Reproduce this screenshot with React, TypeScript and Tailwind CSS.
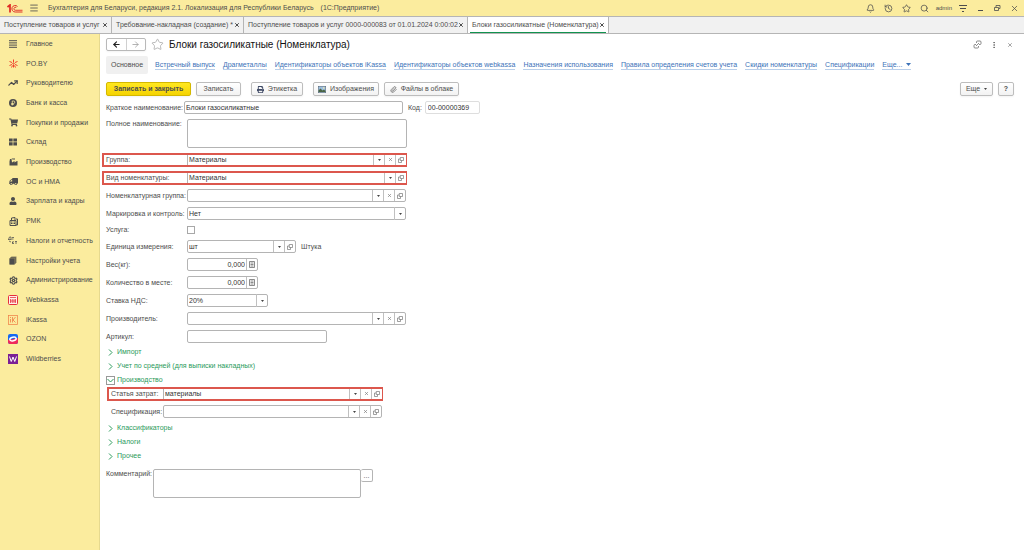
import React from "react";
import {
  ArrowLeft,
  ArrowRight,
  Bell,
  History,
  Star,
  Search,
  X,
  Menu,
  Paperclip,
  TrendingUp,
  Settings,
  EllipsisVertical,
} from "lucide-react";
import { FaShoppingCart, FaTruck, FaUser, FaPrint } from "react-icons/fa";

const tabs = [
  { title: "Поступление товаров и услуг", width: "w-[112px]" },
  { title: "Требование-накладная (создание) *", width: "w-[132px]" },
  { title: "Поступление товаров и услуг 0000-000083 от 01.01.2024 0:00:02", width: "w-[224px]" },
  { title: "Блоки газосиликатные (Номенклатура)", width: "w-[141px]", active: true },
];

const links = [
  "Встречный выпуск",
  "Драгметаллы",
  "Идентификаторы объектов iKassa",
  "Идентификаторы объектов webkassa",
  "Назначения использования",
  "Правила определения счетов учета",
  "Скидки номенклатуры",
  "Спецификации",
];

const sections = [
  { title: "Главное", icon: <ListIcon /> },
  { title: "PO.BY", icon: <SparkIcon /> },
  { title: "Руководителю", icon: <TrendingUp size={10} strokeWidth={3} /> },
  { title: "Банк и касса", icon: <RubleIcon /> },
  { title: "Покупки и продажи", icon: <FaShoppingCart size={9} /> },
  { title: "Склад", icon: <StockIcon /> },
  { title: "Производство", icon: <FactoryIcon /> },
  { title: "ОС и НМА", icon: <FaTruck size={9} className="-scale-x-100" /> },
  { title: "Зарплата и кадры", icon: <FaUser size={8} /> },
  { title: "РМК", icon: <RegisterIcon /> },
  { title: "Налоги и отчетность", icon: <DebitIcon /> },
  { title: "Настройки учета", icon: <BooksIcon /> },
  { title: "Администрирование", icon: <Settings size={9} strokeWidth={3} /> },
  { title: "Webkassa", icon: <WebkassaIcon /> },
  { title: "iKassa", icon: <IkassaIcon /> },
  { title: "OZON", icon: <OzonIcon /> },
  { title: "Wildberries", icon: <WildberriesIcon /> },
];

function ListIcon() {
  return (
    <svg width="8" height="8" viewBox="0 0 8 8" stroke="currentColor">
      <path d="M0 .7h8M0 2.9h8M0 5.1h8M0 7.3h8" />
    </svg>
  );
}

function SparkIcon() {
  return (
    <svg width="9" height="9" viewBox="0 0 18 18" stroke="#f0402c" strokeWidth="2" fill="none">
      <path d="M9 1v5M9 12v5M1 5l5 2M17 5l-5 2M1 13l5-2M17 13l-5-2M5 17l2-4M13 17l-2-4" />
      <circle cx="9" cy="9" r="1.5" />
    </svg>
  );
}

function RubleIcon() {
  return (
    <svg width="8" height="8" viewBox="0 0 16 16">
      <circle cx="8" cy="8" r="8" fill="currentColor" />
      <path d="M6.5 13V4H9a2.3 2.3 0 010 5H4.5M4.5 11h5" fill="none" stroke="#fbec9e" strokeWidth="1.6" />
    </svg>
  );
}

function StockIcon() {
  return (
    <svg width="8" height="8" viewBox="0 0 16 16" fill="currentColor">
      <path d="M0 1h7.3v6H0zM8.7 1H16v6H8.7zM0 8.5h7.3V15H0zM8.7 8.5H16V15H8.7z" />
    </svg>
  );
}

function FactoryIcon() {
  return (
    <svg width="9" height="8" viewBox="0 0 18 16" fill="currentColor">
      <path d="M1 15V7l1-5h3l1 7 5-3v3l5-3h1v9z" />
      <path d="M5 1h7v2H7z" />
    </svg>
  );
}

function RegisterIcon() {
  return (
    <svg width="9" height="9" viewBox="0 0 18 18" fill="none" stroke="currentColor" strokeWidth="2">
      <path d="M2 7h12v10H2zM5 7V2l7-1v6M14 4h3v12h-3" />
      <path d="M4 10h8M4 13h8" strokeDasharray="2 1" />
    </svg>
  );
}

function DebitIcon() {
  return (
    <svg width="10" height="9" viewBox="0 0 20 18" fill="none" stroke="currentColor" strokeWidth="1.5">
      <path d="M1 7l2-5h3v5M0 7h7M8 3h4M8 6h3M9 11v5M9 13l3-2M9 13l3 3M14 11h4M16 11v5M2 10l4 2" />
    </svg>
  );
}

function BooksIcon() {
  return (
    <svg width="8" height="9" viewBox="0 0 16 18">
      <path d="M1 5l4-4h10v12l-4 4H1z" fill="#8d8560" />
      <path d="M1 5h10v12H1z" fill="currentColor" />
      <path d="M3 3h10v12" fill="none" stroke="currentColor" />
    </svg>
  );
}

function WebkassaIcon() {
  return (
    <svg width="10" height="10" viewBox="0 0 20 20">
      <rect x="1" y="1" width="18" height="18" rx="2" fill="#fff0e8" stroke="#e52d3c" strokeWidth="2" />
      <path d="M4 5h12M5 8v8M8.5 8v8M12 8v8M15 8v8M4 12h12" stroke="#e52d3c" strokeWidth="1.5" />
    </svg>
  );
}

function IkassaIcon() {
  return (
    <svg width="10" height="10" viewBox="0 0 20 20" fill="none" stroke="#f0824a">
      <rect x="1" y="1" width="18" height="18" strokeWidth="1.5" />
      <path d="M5 8v7M5 4v2M9 4v11M15 4l-5 6 5 5" strokeWidth="1.7" />
    </svg>
  );
}

function OzonIcon() {
  return (
    <svg width="10" height="10" viewBox="0 0 20 20">
      <rect width="20" height="20" rx="4" fill="#1769f0" />
      <path d="M0 12v4a4 4 0 004 4h12a4 4 0 004-4V8z" fill="#f0285a" />
      <ellipse cx="10" cy="10" rx="6.5" ry="3.5" fill="none" stroke="#fff" strokeWidth="3" transform="rotate(-12 10 10)" />
    </svg>
  );
}

function WildberriesIcon() {
  return (
    <svg width="10" height="10" viewBox="0 0 20 20">
      <rect width="20" height="20" fill="#7b1f96" />
      <path d="M3 5l3.5 10L10 6l3.5 9L17 5" fill="none" stroke="#fff" strokeWidth="2" />
    </svg>
  );
}

function LogoIcon() {
  return (
    <svg width="16" height="9" viewBox="0 0 32 18" fill="none" stroke="#e02d26">
      <path d="M1 6l5-4v15" strokeWidth="3.5" />
      <path d="M21 5a6.5 6.500 0 10-4.500 11H31" strokeWidth="2" />
      <path d="M18.500 7a3 3 0 10-2 5.500H31" strokeWidth="1.800" />
    </svg>
  );
}

function OpenIcon() {
  return (
    <svg width="6" height="6" viewBox="0 0 12 12" fill="none" stroke="#777" strokeWidth="1.4">
      <path d="M4.500 1h6.500v6H4.500zM4.500 4H1v7h6V7" />
    </svg>
  );
}

function Arrow() {
  return (
    <svg width="3" height="2" viewBox="0 0 3 2" fill="#444">
      <path d="M0 0h3L1.500 2z" />
    </svg>
  );
}

function CalcIcon() {
  return (
    <svg width="6" height="7" viewBox="0 0 12 14" fill="none" stroke="#666" strokeWidth="1.5">
      <path d="M1 1h10v12H1zM3 4h6M3 7h6M3 10h6" />
    </svg>
  );
}

function LinkIcon() {
  return (
    <svg width="9" height="9" viewBox="0 0 18 18" fill="none" stroke="#666" strokeWidth="1.5">
      <path d="M7 6V4a2 2 0 012-2h5a2 2 0 012 2v3a2 2 0 01-2 2h-2M11 12v2a2 2 0 01-2 2H4a2 2 0 01-2-2v-3a2 2 0 012-2h2M6 12l6-6" />
    </svg>
  );
}

function PictureIcon() {
  return (
    <svg width="8" height="7" viewBox="0 0 16 14">
      <rect x=".5" y=".5" width="15" height="13" fill="#9dbfe0" stroke="#4d5c6b" />
      <path d="M1 12V9l4-4 4 4 3-2 3 3v2z" fill="#4a6544" />
      <circle cx="11.5" cy="4" r="1.5" fill="#fff2a0" />
    </svg>
  );
}

type Cell = "list" | "clear" | "open" | "calc";

const cells = {
  list: { label: "Выбрать из списка", icon: <Arrow /> },
  clear: { label: "Очистить", icon: <X size={5} strokeWidth={3} /> },
  open: { label: "Открыть", icon: <OpenIcon /> },
  calc: { label: "Калькулятор", icon: <CalcIcon /> },
};

type FieldProps = {
  id: string;
  label: string;
  value?: string;
  buttons?: Cell[];
  width?: string;
  labelWidth?: string;
  right?: boolean;
  marked?: boolean;
  note?: string;
};

function Field({ id, label, value = "", buttons = [], width = "w-[219px]", labelWidth = "w-[81px]", right, marked, note }: FieldProps) {
  return (
    <div className="flex h-[13px] items-center">
      <div className={marked ? "-ml-1 flex h-[14px] items-center border-2 border-[#dc574d] pl-0.5" : "flex h-full items-center"}>
        <label htmlFor={id} className={`shrink-0 whitespace-nowrap ${labelWidth}`}>{label}</label>
        <div className={`flex h-full border-[#b4b4b4] bg-white ${width} ${marked ? "-mr-px border-l" : "rounded-xs border"}`}>
          <input
            id={id}
            defaultValue={value}
            className={`min-w-0 flex-1 px-px text-[#333] outline-none ${right ? "text-right" : ""}`}
          />
          {buttons.map((name) => (
            <button
              key={name}
              type="button"
              aria-label={cells[name].label}
              className="flex w-[11px] shrink-0 items-center justify-center border-l border-[#c0c0c0] text-[#777]"
            >
              {cells[name].icon}
            </button>
          ))}
        </div>
      </div>
      {note && <span className="ml-[5px]">{note}</span>}
    </div>
  );
}

function SelectField({ id, label, value, width }: { id: string; label: string; value: string; width: string }) {
  return (
    <div className="flex h-[13px] items-center">
      <label htmlFor={id} className="w-[81px] shrink-0 whitespace-nowrap">{label}</label>
      <div className={`relative h-full ${width}`}>
        <select
          id={id}
          defaultValue={value}
          className="block h-full w-full appearance-none rounded-xs border border-[#b4b4b4] bg-white px-px text-[#333] outline-none"
        >
          <option>{value}</option>
        </select>
        <span className="pointer-events-none absolute inset-y-0 right-0 flex w-3 items-center justify-center border-l border-[#c0c0c0]">
          <Arrow />
        </span>
      </div>
    </div>
  );
}

function Group({ title, open }: { title: string; open?: boolean }) {
  return (
    <button type="button" aria-expanded={!!open} className="flex h-[14px] items-center gap-0.5 text-[#2b9a5b]">
      <span className={`flex size-[9px] items-center justify-center ${open ? "border border-[#999]" : ""}`}>
        {open ? (
          <svg width="7" height="5" viewBox="0 0 7 5" fill="none" stroke="currentColor">
            <path d="M.5 1l3 3 3-3" />
          </svg>
        ) : (
          <svg width="5" height="7" viewBox="0 0 5 7" fill="none" stroke="currentColor">
            <path d="M1 .5l3 3-3 3" />
          </svg>
        )}
      </span>
      {title}
    </button>
  );
}

type CommandProps = { children: React.ReactNode; className?: string; primary?: boolean };

function Command({ children, className = "", primary }: CommandProps) {
  const colors = primary
    ? "border-[#d4b800] from-[#ffe81f] to-[#f5d300] font-bold"
    : "border-[#bdbdbd] from-white to-[#f2f2f2]";
  return (
    <button
      type="button"
      className={`flex h-[14px] items-center justify-center gap-1 whitespace-nowrap rounded-xs border bg-linear-to-b shadow-xs ${colors} ${className}`}
    >
      {children}
    </button>
  );
}

function App() {
  return (
    <div className="flex min-h-screen flex-col bg-white font-['Liberation_Sans',Arial,sans-serif] text-[7px] leading-[8px] text-[#4d4d4d]">
      {/* Title bar */}
      <header className="flex h-4 items-center bg-[#fbec9e] pl-[7px] pr-[5px]">
        <LogoIcon />
        <button type="button" aria-label="Меню" className="ml-[6px]">
          <Menu size={10} strokeWidth={2} />
        </button>
        <span className="ml-[9px]">
          Бухгалтерия для Беларуси, редакция 2.1. Локализация для Республики Беларусь
        </span>
        <span className="ml-[7px]">(1С:Предприятие)</span>
        <div className="ml-auto flex items-center gap-[9px]">
          <button type="button" aria-label="Уведомления"><Bell size={9} /></button>
          <button type="button" aria-label="История"><History size={9} /></button>
          <button type="button" aria-label="Избранное"><Star size={9} /></button>
          <button type="button" aria-label="Поиск"><Search size={9} /></button>
          <span className="-mx-[2px] text-[6px]">admin</span>
          <button type="button" aria-label="Настройки">
            <svg width="8" height="9" viewBox="0 0 8 9" stroke="currentColor">
              <path d="M0 1.500h8M1 4.500h6M3 7.500h2" />
            </svg>
          </button>
          <button type="button" aria-label="Свернуть">
            <svg width="8" height="8" viewBox="0 0 8 8" stroke="currentColor"><path d="M2 6.500h5" /></svg>
          </button>
          <button type="button" aria-label="Развернуть">
            <svg width="8" height="8" viewBox="0 0 8 8" stroke="currentColor" strokeWidth=".8" fill="none">
              <path d="M1.500 3.500h4v3h-4zM3 3V1.500h4v3H6" />
            </svg>
          </button>
          <button type="button" aria-label="Закрыть"><X size={9} /></button>
        </div>
      </header>

      {/* Open windows */}
      <div className="flex h-[18px] border-y border-[#b5b5b5] bg-[#f1f1f1]">
        {tabs.map((tab) => (
          <div
            key={tab.title}
            className={`relative flex items-center justify-between border-r border-[#b5b5b5] pl-1 pr-[3px] ${tab.width} ${tab.active ? "bg-white" : ""}`}
          >
            <a href="#" className="whitespace-nowrap">{tab.title}</a>
            <button type="button" aria-label="Закрыть вкладку" className="shrink-0"><X size={6} strokeWidth={4} /></button>
            {tab.active && <span className="absolute inset-x-0.5 bottom-0 h-px bg-[#12934f]" />}
          </div>
        ))}
      </div>

      <div className="flex flex-1">
        <nav className="w-[100px] shrink-0 border-r border-[#e6d98f] bg-[#fbec9e]">
          <ul className="grid h-[335px] auto-rows-fr">
            {sections.map((section) => (
              <li key={section.title} className="flex">
                <a href="#" className="flex items-center gap-2 whitespace-nowrap pl-2">
                  <span className="flex w-[10px] justify-center">{section.icon}</span>
                  {section.title}
                </a>
              </li>
            ))}
          </ul>
        </nav>

        <main className="min-w-0 flex-1 pb-4 pl-[6px] pr-[10px] pt-1">
          <div className="flex h-[13px] items-center">
            <div className="flex h-[13px] w-10 rounded-xs border border-[#b9b9b9] shadow-xs">
              <button type="button" aria-label="Назад" className="flex flex-1 items-center justify-center border-r border-[#d0d0d0] text-[#222]">
                <ArrowLeft size={9} strokeWidth={3} />
              </button>
              <button type="button" aria-label="Вперед" className="flex flex-1 items-center justify-center text-[#999]">
                <ArrowRight size={9} strokeWidth={2} />
              </button>
            </div>
            <button type="button" aria-label="В избранное" className="ml-[5px] text-[#aaa]">
              <Star size={13} strokeWidth={1.5} />
            </button>
            <h1 className="ml-[5px] text-[10px] leading-3 text-[#111]">Блоки газосиликатные (Номенклатура)</h1>
            <div className="ml-auto flex items-center gap-2">
              <button type="button" aria-label="Получить ссылку"><LinkIcon /></button>
              <button type="button" aria-label="Действия"><EllipsisVertical size={8} strokeWidth={2} /></button>
              <button type="button" aria-label="Закрыть" className="px-px"><X size={6} /></button>
            </div>
          </div>

          <nav className="mt-[5px] flex h-[18px] items-center gap-2 whitespace-nowrap">
            <a href="#" className="-mr-px flex h-full items-center rounded-xs bg-[#f0f0f0] px-[5px]">Основное</a>
            {links.map((link) => (
              <a key={link} href="#" className="border-b border-[#b9cfea] text-[#3c72b8]">{link}</a>
            ))}
            <a href="#" className="flex items-center gap-1 border-b border-[#b9cfea] text-[#3c72b8]">
              Еще...
              <svg width="5" height="3" viewBox="0 0 5 3" fill="currentColor"><path d="M0 0h5L2.500 3z" /></svg>
            </a>
          </nav>

          <div className="mt-2 flex items-center">
            <Command primary className="w-[85px]">Записать и закрыть</Command>
            <Command className="ml-[5px] w-[45px]">Записать</Command>
            <Command className="ml-[10px] w-[52px]"><FaPrint size={7} className="text-[#3f4a66]" />Этикетка</Command>
            <Command className="ml-[10px] w-[66px]"><PictureIcon />Изображения</Command>
            <Command className="ml-[5px] w-[75px]"><Paperclip size={7} />Файлы в облаке</Command>
            <Command className="ml-auto w-[33px]">Еще<Arrow /></Command>
            <Command className="ml-[5px] w-4 font-bold">?</Command>
          </div>

          <form className="mt-[5px] flex flex-col gap-[5px]">
            <div className="flex items-center gap-[5px]">
              <Field id="name" label="Краткое наименование:" value="Блоки газосиликатные" labelWidth="w-[78px]" />
              <label htmlFor="code">Код:</label>
              <input id="code" readOnly defaultValue="00-00000369" className="-ml-0.5 h-[13px] w-[55px] rounded-xs border border-[#dedede] px-[2px] text-[#333]" />
            </div>
            <div className="flex">
              <label htmlFor="fullName" className="w-[81px] pt-px">Полное наименование:</label>
              <textarea id="fullName" className="block h-[29px] w-[220px] resize-none rounded-xs border border-[#b4b4b4]" />
            </div>
            <Field id="group" label="Группа:" value="Материалы" buttons={["list", "clear", "open"]} marked />
            <Field id="kind" label="Вид номенклатуры:" value="Материалы" buttons={["list", "open"]} marked />
            <Field id="itemGroup" label="Номенклатурная группа:" buttons={["list", "clear", "open"]} />
            <SelectField id="marking" label="Маркировка и контроль:" value="Нет" width="w-[219px]" />
            <div className="flex h-[10px] items-center">
              <label htmlFor="service" className="w-[81px]">Услуга:</label>
              <input id="service" type="checkbox" className="size-2 appearance-none border border-[#a8a8a8] bg-white" />
            </div>
            <Field id="unit" label="Единица измерения:" value="шт" buttons={["list", "open"]} width="w-[109px]" note="Штука" />
            <Field id="weight" label="Вес(кг):" value="0,000" buttons={["calc"]} width="w-[71px]" right />
            <Field id="quantity" label="Количество в месте:" value="0,000" buttons={["calc"]} width="w-[71px]" right />
            <SelectField id="vat" label="Ставка НДС:" value="20%" width="w-[81px]" />
            <Field id="maker" label="Производитель:" buttons={["list", "clear", "open"]} />
            <Field id="article" label="Артикул:" width="w-[140px]" />

            <div className="-mt-[3px] flex flex-col items-start">
              <Group title="Импорт" />
              <Group title="Учет по средней (для выписки накладных)" />
              <Group title="Производство" open />
              <div className="flex flex-col gap-[5px] pb-[3px] pl-[5px]">
                <Field id="cost" label="Статья затрат:" value="материалы" buttons={["list", "clear", "open"]} labelWidth="w-[52px]" marked />
                <Field id="spec" label="Спецификация:" buttons={["list", "clear", "open"]} labelWidth="w-[52px]" />
              </div>
              <Group title="Классификаторы" />
              <Group title="Налоги" />
              <Group title="Прочее" />
            </div>

            <div className="flex items-start pt-px">
              <label htmlFor="comment" className="w-[47px] pt-px">Комментарий:</label>
              <textarea id="comment" className="block h-[29px] w-[208px] resize-none rounded-xs border border-[#b4b4b4]" />
              <button type="button" aria-label="Редактировать" className="h-[13px] w-3 rounded-xs border border-l-0 border-[#b4b4b4]">...</button>
            </div>
          </form>
        </main>
      </div>
    </div>
  );
}

export default App;
